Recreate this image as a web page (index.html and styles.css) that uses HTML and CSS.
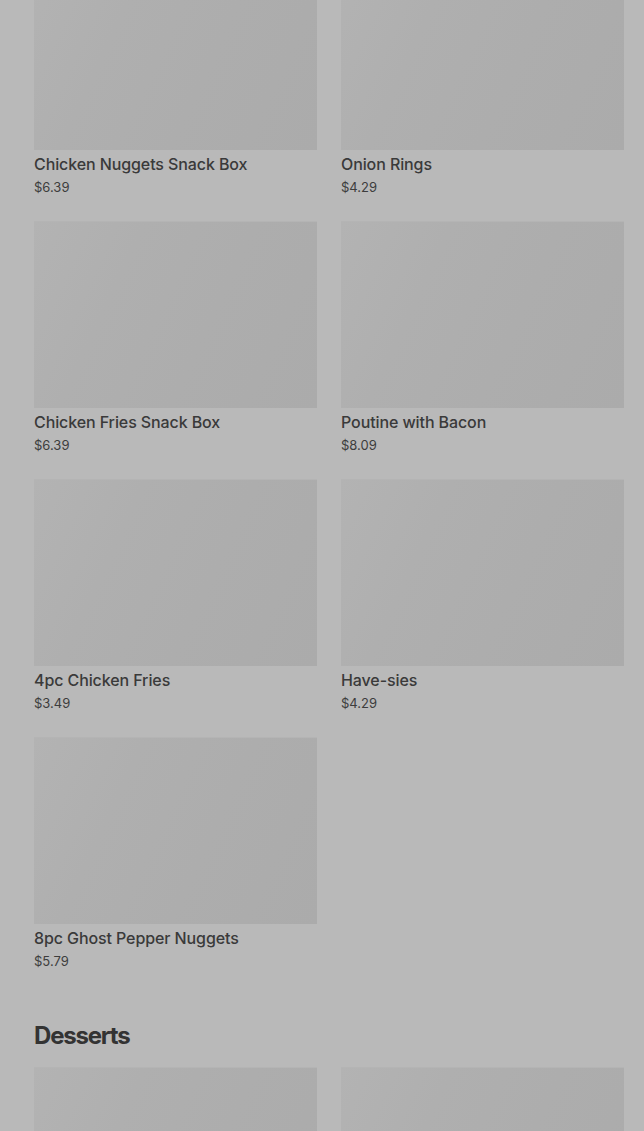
FILE: index.html
```html
<!DOCTYPE html>
<html lang="en">
<head>
<meta charset="utf-8">
<link rel="stylesheet" href="styles.css">
</head>
<body>
<main class="menu">
  <section class="section section-sides">
    <div class="grid">
      <div class="item"><div class="thumb"></div><div class="name">Chicken Nuggets Snack Box</div><div class="price">$6.39</div></div>
      <div class="item"><div class="thumb"></div><div class="name">Onion Rings</div><div class="price">$4.29</div></div>
      <div class="item"><div class="thumb"></div><div class="name">Chicken Fries Snack Box</div><div class="price">$6.39</div></div>
      <div class="item"><div class="thumb"></div><div class="name">Poutine with Bacon</div><div class="price">$8.09</div></div>
      <div class="item"><div class="thumb"></div><div class="name">4pc Chicken Fries</div><div class="price">$3.49</div></div>
      <div class="item"><div class="thumb"></div><div class="name">Have-sies</div><div class="price">$4.29</div></div>
      <div class="item"><div class="thumb"></div><div class="name">8pc Ghost Pepper Nuggets</div><div class="price">$5.79</div></div>
    </div>
  </section>
  <section class="section">
    <h2 class="section-title">Desserts</h2>
    <div class="grid">
      <div class="item"><div class="thumb"></div></div>
      <div class="item"><div class="thumb"></div></div>
    </div>
  </section>
</main>
</body>
</html>
```
FILE: styles.css
```css
html, body {
  margin: 0;
  padding: 0;
  background: #b9b9b9;
  overflow: hidden;
}
body {
  font-family: Inter, "Noto Sans", "Liberation Sans", sans-serif;
  color: #3a3a3a;
}
.menu {
  padding: 0 20px 0 34px;
  margin-top: -37px;
}
.grid {
  display: grid;
  grid-template-columns: 1fr 1fr;
  column-gap: 24px;
  row-gap: 25px;
}
.thumb {
  height: 187px;
  background: linear-gradient(115deg, #b3b3b3 0%, #afafaf 30%, #adadad 60%, #ababab 100%);
  border-top: 1px solid #b4b4b4;
  box-sizing: border-box;
}
.name {
  margin-top: 2px;
  font-size: 16px;
  font-weight: 500;
  line-height: 24px;
  letter-spacing: -0.1px;
  color: #3a3a3a;
}
.price {
  margin-top: 2px;
  font-size: 13px;
  line-height: 18px;
  color: #3d3d3d;
}
.section-sides {
  padding-bottom: 50px;
}
.section-title {
  margin: 0 0 15px;
  font-size: 24px;
  font-weight: 700;
  line-height: 32px;
  letter-spacing: -1.2px;
  color: #333;
}
```
